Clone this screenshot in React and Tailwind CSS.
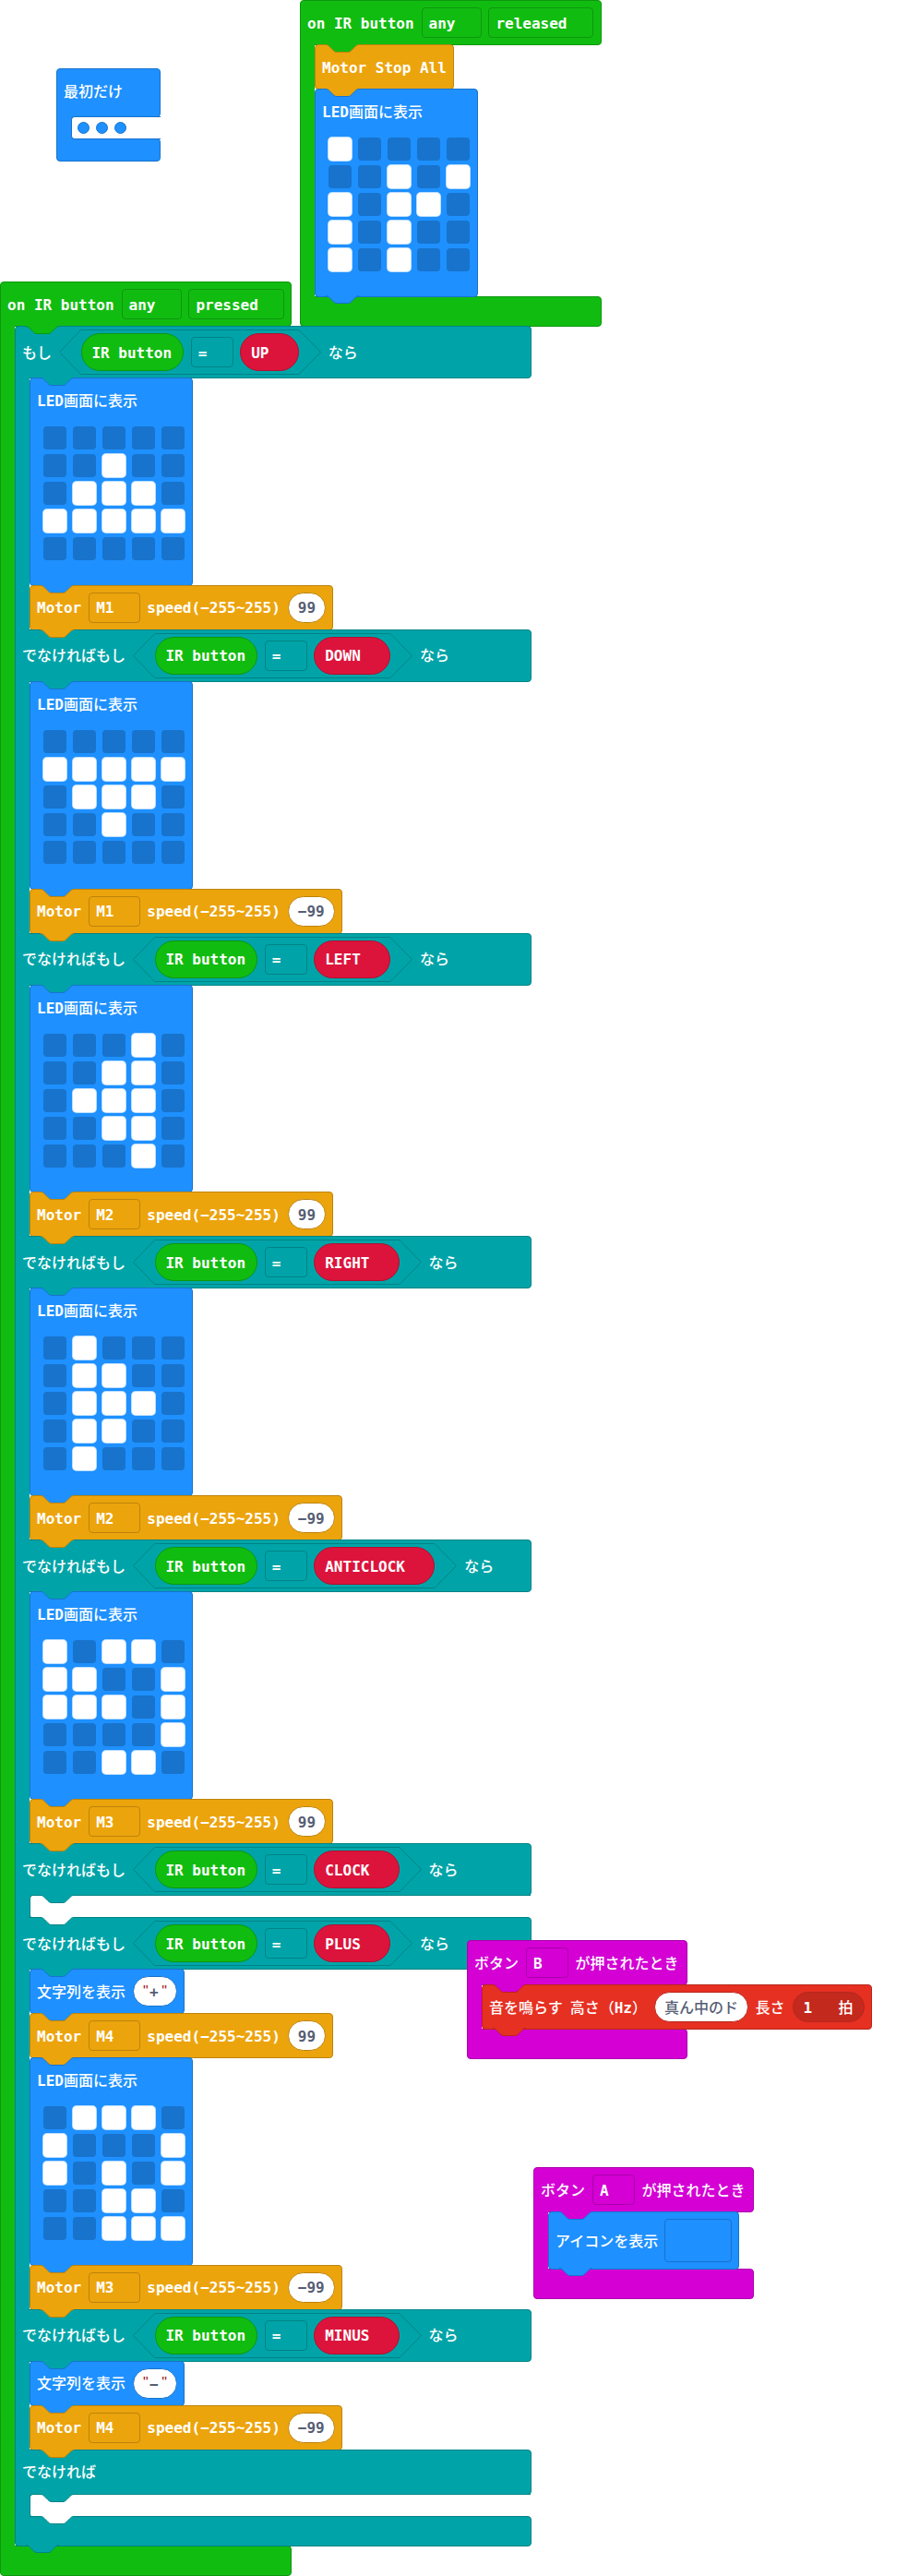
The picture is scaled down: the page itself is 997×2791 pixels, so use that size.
const FONT = "font-['DejaVu_Sans_Mono','Noto_Sans_CJK_JP',monospace]";

const THEMES = {
  green: { box: 'bg-[#11bc11] border-[#0e960e]', line: 'border-[#0e960e]', fill: '#11bc11', stroke: '#0e960e' },
  teal: { box: 'bg-[#00a4a8] border-[#008386]', line: 'border-[#008386]', fill: '#00a4a8', stroke: '#008386' },
  blue: { box: 'bg-[#1e90ff] border-[#1873cc]', line: 'border-[#1873cc]', fill: '#1e90ff', stroke: '#1873cc' },
  orange: { box: 'bg-[#eca40d] border-[#bd830a]', line: 'border-[#bd830a]', fill: '#eca40d', stroke: '#bd830a' },
  magenta: { box: 'bg-[#d400d4] border-[#aa00aa]', line: 'border-[#aa00aa]', fill: '#d400d4', stroke: '#aa00aa' },
  red: { box: 'bg-[#e63022] border-[#b8261b]', line: 'border-[#b8261b]', fill: '#e63022', stroke: '#b8261b' },
};

function Jp({ children }) {
  return <span className="font-medium">{children}</span>;
}

function Notch({ fill, stroke, className }) {
  return (
    <svg className={`absolute h-[10px] w-9 ${className}`} viewBox="0 0 36 10">
      <path d="M0 0V.5c2 0 3 1 4 2l4 4c1 1 2 2 4 2h12c2 0 3-1 4-2l4-4c1-1 2-2 4-2V0z" fill={fill} />
      <path d="M0 .5c2 0 3 1 4 2l4 4c1 1 2 2 4 2h12c2 0 3-1 4-2l4-4c1-1 2-2 4-2" fill="none" stroke={stroke} />
    </svg>
  );
}

function Field({ theme, children }) {
  return (
    <div className={`-mr-[0.5px] flex h-[33px] items-center rounded-[4px] border pl-[7px] pr-[27.4px] pt-[2px] ${THEMES[theme].line}`}>
      {children}
    </div>
  );
}

function Value({ theme, children }) {
  return (
    <div className={`-mr-[0.5px] flex h-[33px] items-center rounded-full border bg-white px-[10px] pt-[2px] text-[#575e75] ${THEMES[theme].line}`}>
      {children}
    </div>
  );
}

function Statement({ theme, above, last, size = 'h-[49px]', children }) {
  const t = THEMES[theme];
  return (
    <div className={`relative -mb-px flex w-fit items-center gap-2 rounded-[4px] border pl-[7px] pr-[7.5px] [&>span]:pt-[2px] ${t.box} ${size}`}>
      <Notch className="-top-px left-[11px]" fill={THEMES[above].fill} stroke={t.stroke} />
      {children}
      {last && <Notch className="-bottom-[9px] left-[11px] z-10" fill={t.fill} stroke={t.stroke} />}
    </div>
  );
}

function Motor({ port, speed, above }) {
  return (
    <Statement theme="orange" above={above}>
      <span>Motor</span>
      <Field theme="orange">{port}</Field>
      <span>speed(−255~255)</span>
      <Value theme="orange">{speed}</Value>
    </Statement>
  );
}

function Leds({ rows, above, last }) {
  const t = THEMES.blue;
  return (
    <div className={`relative -mb-px h-[225.83px] w-[177px] rounded-[4px] border ${t.box}`}>
      <Notch className="-top-px left-[11px]" fill={THEMES[above].fill} stroke={t.stroke} />
      <div className="flex h-12 items-center pl-[7px] pt-[2px]">
        LED<Jp>画面に表示</Jp>
      </div>
      <div className="ml-[14px] mt-1 grid w-[153px] grid-cols-5 gap-x-[7px] gap-y-[5px]">
        {rows.join('').split('').map((c, i) => (
          <i key={i} className={`size-[25px] rounded-[4px] ${c === '1' ? 'bg-white ring-1 ring-white/70' : 'bg-[#1873cc]'}`} />
        ))}
      </div>
      {last && <Notch className="-bottom-[9px] left-[11px] z-10" fill={t.fill} stroke={t.stroke} />}
    </div>
  );
}

function ShowString({ value, above }) {
  return (
    <Statement theme="blue" above={above}>
      <Jp>文字列を表示</Jp>
      <div className="-mr-[0.5px] flex h-[33px] w-[48px] items-center rounded-full border border-[#1873cc] bg-white pl-[10px] text-[#575e75]">
        <span className="w-[7px] font-['Liberation_Sans'] font-normal text-[#a31515]">"</span>
        <span className="pt-[3px]">{value}</span>
        <span className="ml-[3.5px] font-['Liberation_Sans'] font-normal text-[#a31515]">"</span>
      </div>
    </Statement>
  );
}

function Condition({ value }) {
  return (
    <div className="flex h-[49px] items-stretch">
      <svg className="h-[49px] w-[23.5px]" viewBox="0 0 23.5 49">
        <path d="M23.5 .5L.5 24.5L23.5 48.5" fill="none" stroke="#008386" />
      </svg>
      <div className="flex items-center gap-2 border-y border-[#008386]">
        <div className="-mr-[0.5px] flex h-[41px] items-center rounded-full border border-[#0e960e] bg-[#11bc11] pl-[10.9px] pr-[12.1px] pt-[2px]">IR button</div>
        <Field theme="teal">=</Field>
        <div className="flex h-[41px] items-center rounded-full border border-[#b01030] bg-[#dc143c] pl-[11px] pr-[31.2px] pt-[2px]">{value}</div>
      </div>
      <svg className="h-[49px] w-6" viewBox="0 0 24 49">
        <path d="M0 .5L23.5 24.5L0 48.5" fill="none" stroke="#008386" />
      </svg>
    </div>
  );
}

function Body({ theme, children }) {
  return (
    <div className="relative flex">
      <div className={`relative -mt-[4px] w-4 shrink-0 border-l ${THEMES[theme].box}`} />
      <div className="relative flex shrink-0 flex-col">{children}</div>
    </div>
  );
}

function Empty() {
  return (
    <div className="relative h-6">
      <div className="h-[25px] w-[543px] rounded-l-[4px] border-l border-t border-[#008386] bg-white shadow-[-4px_0_0_0_#00a4a8]">
        <Notch className="left-3 top-0" fill="#00a4a8" stroke="#008386" />
      </div>
    </div>
  );
}

function Branch({ label, value, above, children, size = 'h-[57px]' }) {
  return (
    <>
      <div className={`relative -mb-px flex w-[560px] items-center gap-2 rounded-[4px] border pl-[7px] [&>span]:pt-[2px] ${THEMES.teal.box} ${size}`}>
        <Notch
          className={`-top-px ${above === 'green' ? 'left-[11px]' : 'left-[27px]'}`}
          fill={above === 'empty' ? '#ffffff' : THEMES[above].fill}
          stroke={above === 'empty' ? '#008386' : THEMES[above].stroke}
        />
        <Jp>{label}</Jp>
        {value && <Condition value={value} />}
        {value && <Jp>なら</Jp>}
      </div>
      <Body theme="teal">{children}</Body>
      {/* joins the rail to the next header */}
      <div className="relative z-[1] -my-1 h-2 w-[15px] border-l border-[#008386] bg-[#00a4a8]" />
    </>
  );
}

function Hat({ theme, width, children, body }) {
  return (
    <div className={`flex flex-col ${width}`}>
      <div className={`-mb-px flex h-[49px] items-center gap-2 rounded-[4px] border pl-[7px] [&>span]:pt-[2px] ${THEMES[theme].box}`}>{children}</div>
      <div className="relative z-[1]">
        <Body theme={theme}>{body}</Body>
      </div>
      <div className={`relative h-[33px] rounded-[4px] rounded-tl-none border ${THEMES[theme].box}`}>
        <div className={`absolute -left-px -top-1 h-2 w-4 border-l ${THEMES[theme].box}`} />
      </div>
    </div>
  );
}

const ICONS = {
  stop: ['10000', '00101', '10110', '10100', '10100'],
  up: ['00000', '00100', '01110', '11111', '00000'],
  down: ['00000', '11111', '01110', '00100', '00000'],
  left: ['00010', '00110', '01110', '00110', '00010'],
  right: ['01000', '01100', '01110', '01100', '01000'],
  anticlock: ['10110', '11001', '11101', '00001', '00110'],
  clock: ['01110', '10001', '10101', '00110', '00111'],
};

export default function App() {
  return (
    <div className={`relative isolate h-[2791px] w-[997px] overflow-hidden whitespace-nowrap bg-white text-[16px] font-bold leading-none text-white ${FONT}`}>
      <section className="absolute left-[61px] top-[74px] isolate flex w-[113px] flex-col">
        <div className="-mb-px h-[53px] rounded-[4px] border border-[#1873cc] bg-[#1e90ff] pl-[7px] pt-[17px]">
          <Jp>最初だけ</Jp>
        </div>
        <div className="relative z-[1] flex h-6">
          <div className="relative -my-1 w-5 border-l border-[#1873cc] bg-[#1e90ff]" />
          <div className="relative -ml-1 h-[25px] flex-1 rounded-l-[4px] border-y border-l border-[#1873cc] bg-white">
            <div className="flex gap-[7px] pl-[6px] pt-[5px]">
              <i className="size-[13px] rounded-full border border-[#1873cc] bg-[#1e90ff]" />
              <i className="size-[13px] rounded-full border border-[#1873cc] bg-[#1e90ff]" />
              <i className="size-[13px] rounded-full border border-[#1873cc] bg-[#1e90ff]" />
            </div>
          </div>
        </div>
        <div className="h-[25px] rounded-[4px] border border-[#1873cc] bg-[#1e90ff]" />
      </section>

      <section className="absolute left-[325px] top-0 isolate">
        <Hat
          theme="green"
          width="w-[327px]"
          body={
            <>
              <Statement theme="orange" above="green">
                <span>Motor Stop All</span>
              </Statement>
              <Leds rows={ICONS.stop} above="orange" last />
            </>
          }
        >
          <span>on IR button</span>
          <Field theme="green">any</Field>
          <Field theme="green">released</Field>
        </Hat>
      </section>

      <section className="absolute left-0 top-[305px] isolate">
        <Hat
          theme="green"
          width="w-[316px]"
          body={
            <div className="relative flex flex-col">
              <Branch label="もし" value="UP" above="green">
                <Leds rows={ICONS.up} above="teal" />
                <Motor port="M1" speed="99" above="blue" />
              </Branch>
              <Branch label="でなければもし" value="DOWN" above="orange">
                <Leds rows={ICONS.down} above="teal" />
                <Motor port="M1" speed="−99" above="blue" />
              </Branch>
              <Branch label="でなければもし" value="LEFT" above="orange">
                <Leds rows={ICONS.left} above="teal" />
                <Motor port="M2" speed="99" above="blue" />
              </Branch>
              <Branch label="でなければもし" value="RIGHT" above="orange">
                <Leds rows={ICONS.right} above="teal" />
                <Motor port="M2" speed="−99" above="blue" />
              </Branch>
              <Branch label="でなければもし" value="ANTICLOCK" above="orange">
                <Leds rows={ICONS.anticlock} above="teal" />
                <Motor port="M3" speed="99" above="blue" />
              </Branch>
              <Branch label="でなければもし" value="CLOCK" above="orange">
                <Empty />
              </Branch>
              <Branch label="でなければもし" value="PLUS" above="empty">
                <ShowString value="+" above="teal" />
                <Motor port="M4" speed="99" above="blue" />
                <Leds rows={ICONS.clock} above="orange" />
                <Motor port="M3" speed="−99" above="blue" />
              </Branch>
              <Branch label="でなければもし" value="MINUS" above="orange">
                <ShowString value="−" above="teal" />
                <Motor port="M4" speed="−99" above="blue" />
              </Branch>
              <Branch label="でなければ" above="orange" size="h-[49px]">
                <Empty />
              </Branch>
              <div className={`relative -mb-px h-[33px] w-[560px] rounded-[4px] rounded-tl-none border ${THEMES.teal.box}`}>
                <div className="absolute -left-px -top-1 h-2 w-4 border-l border-[#008386] bg-[#00a4a8]" />
                <Notch className="-top-px left-[27px]" fill="#ffffff" stroke="#008386" />
                <Notch className="-bottom-[9px] left-[11px]" fill="#00a4a8" stroke="#008386" />
              </div>
            </div>
          }
        >
          <span>on IR button</span>
          <Field theme="green">any</Field>
          <Field theme="green">pressed</Field>
        </Hat>
      </section>

      <section className="absolute left-[506px] top-[2102px] isolate">
        <Hat
          theme="magenta"
          width="w-[239px]"
          body={
            <Statement theme="red" above="magenta" last>
              <Jp>音を鳴らす</Jp>
              <span>
                <Jp>高さ（</Jp>Hz<Jp>）</Jp>
              </span>
              <Value theme="red">
                <Jp>真ん中のド</Jp>
              </Value>
              <Jp>長さ</Jp>
              <div className="-mr-[0.5px] flex h-[33px] w-[78px] items-center justify-between rounded-full border border-[#b8261b] bg-[#c4291d] px-[11px] pt-[2px]">
                <span>1</span>
                <Jp>拍</Jp>
              </div>
            </Statement>
          }
        >
          <Jp>ボタン</Jp>
          <Field theme="magenta">B</Field>
          <Jp>が押されたとき</Jp>
        </Hat>
      </section>

      <section className="absolute left-[578px] top-[2348px] isolate">
        <Hat
          theme="magenta"
          width="w-[239px]"
          body={
            <Statement theme="blue" above="magenta" last size="h-[63px]">
              <Jp>アイコンを表示</Jp>
              <div className="-ml-px -mr-[0.5px] h-[47px] w-[73px] rounded-[4px] border border-[#1873cc]" />
            </Statement>
          }
        >
          <Jp>ボタン</Jp>
          <Field theme="magenta">A</Field>
          <Jp>が押されたとき</Jp>
        </Hat>
      </section>
    </div>
  );
}
